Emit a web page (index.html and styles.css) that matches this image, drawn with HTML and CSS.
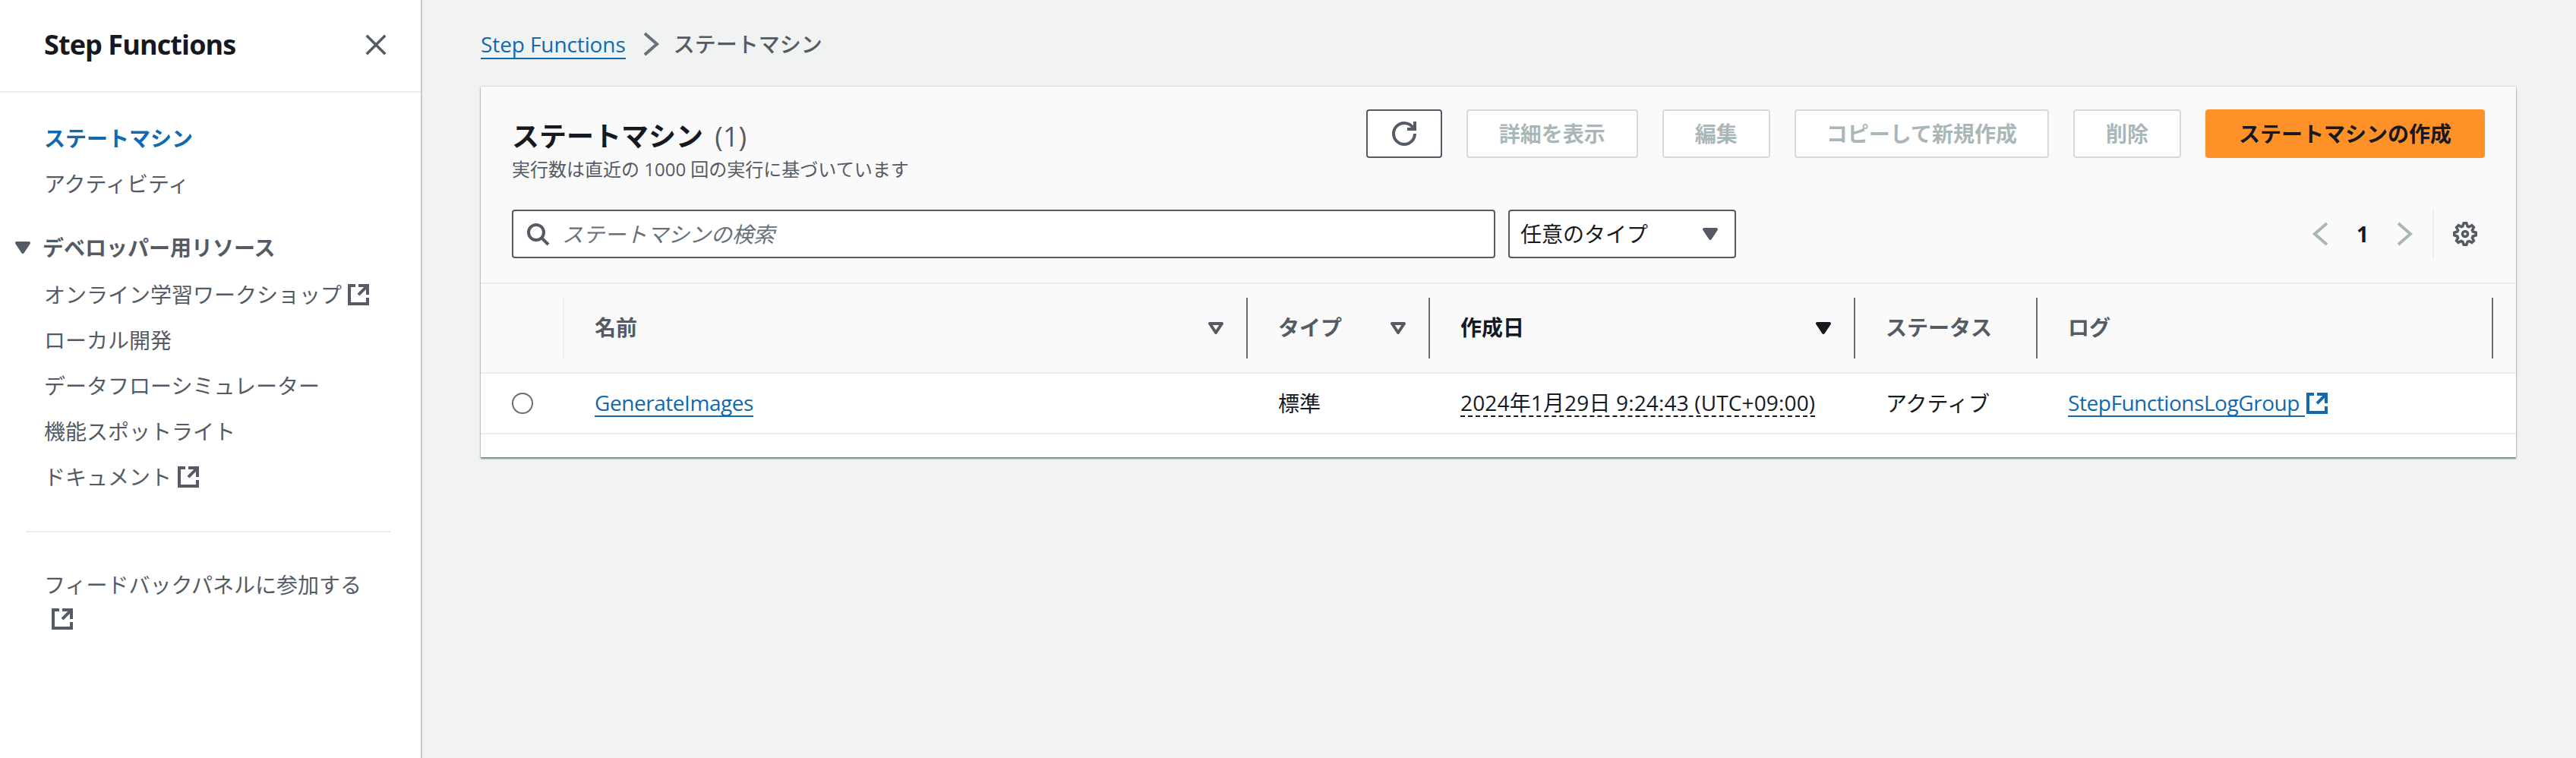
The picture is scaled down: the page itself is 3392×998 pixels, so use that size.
FILE: index.html
```html
<!DOCTYPE html>
<html lang="ja">
<head>
<meta charset="utf-8">
<title>ステートマシン - Step Functions</title>
<link rel="stylesheet" href="styles.css">
</head>
<body>
<svg class="defs" width="0" height="0" aria-hidden="true">
  <symbol id="ext" viewBox="0 0 16 16"><path d="M14 8.01v-6H8M14.02 2 8 8.02M6 2.01H2v12h12v-3.99" fill="none" stroke="currentColor" stroke-width="2"/></symbol>
  <symbol id="caret" viewBox="0 0 16 16"><path d="M4 5h8l-4 6z" fill="currentColor" stroke="currentColor" stroke-width="2" stroke-linejoin="round"/></symbol>
  <symbol id="sort" viewBox="0 0 16 16"><path d="M4 5h8l-4 6z" fill="none" stroke="currentColor" stroke-width="2" stroke-linejoin="round"/></symbol>
  <symbol id="chev-r" viewBox="0 0 16 16"><path d="m4 1 8 7-8 7" fill="none" stroke="currentColor" stroke-width="2"/></symbol>
  <symbol id="chev-l" viewBox="0 0 16 16"><path d="M12 1 4 8l8 7" fill="none" stroke="currentColor" stroke-width="2"/></symbol>
</svg>
<div class="app">
  <aside class="side">
    <header class="side-head">
      <h2 class="side-title">Step Functions</h2>
      <svg class="close" viewBox="0 0 16 16"><path d="m1 1 14 14M15 1 1 15" fill="none" stroke="currentColor" stroke-width="2"/></svg>
    </header>
    <nav class="nav">
      <a class="nav-item active">ステートマシン</a>
      <a class="nav-item">アクティビティ</a>
      <div class="nav-section"><svg class="section-caret"><use href="#caret"/></svg><span>デベロッパー用リソース</span></div>
      <a class="nav-item">オンライン学習ワークショップ <svg class="ext"><use href="#ext"/></svg></a>
      <a class="nav-item">ローカル開発</a>
      <a class="nav-item">データフローシミュレーター</a>
      <a class="nav-item">機能スポットライト</a>
      <a class="nav-item">ドキュメント <svg class="ext"><use href="#ext"/></svg></a>
      <hr class="nav-rule">
      <a class="nav-feedback">フィードバックパネルに参加する <svg class="ext ext-wrap"><use href="#ext"/></svg></a>
    </nav>
  </aside>
  <main class="main">
    <div class="crumbs">
      <a class="link crumb-link">Step Functions</a>
      <svg class="crumb-sep"><use href="#chev-r"/></svg>
      <span class="crumb-current">ステートマシン</span>
    </div>
    <section class="card">
      <div class="card-head">
        <div class="head-row">
          <div class="head-text">
            <h1 class="title">ステートマシン <span class="count">(1)</span></h1>
            <p class="sub">実行数は直近の 1000 回の実行に基づいています</p>
          </div>
          <div class="actions">
            <button class="btn btn-icon"><svg class="refresh" viewBox="0 0 16 16"><path d="M10 5h5V0M15 8a6.99 6.99 0 0 1-7 7 6.99 6.99 0 0 1-7-7 6.99 6.99 0 0 1 7-7 6.99 6.99 0 0 1 6.41 4.17" fill="none" stroke="currentColor" stroke-width="2"/></svg></button>
            <button class="btn btn-off">詳細を表示</button>
            <button class="btn btn-off">編集</button>
            <button class="btn btn-off btn-long">コピーして新規作成</button>
            <button class="btn btn-off">削除</button>
            <button class="btn btn-primary">ステートマシンの作成</button>
          </div>
        </div>
        <div class="filter-row">
          <div class="search">
            <svg class="search-icon" viewBox="0 0 16 16"><circle cx="7" cy="7" r="5" fill="none" stroke="currentColor" stroke-width="2"/><path d="m15 15-4.5-4.5" fill="none" stroke="currentColor" stroke-width="2"/></svg>
            <span class="placeholder">ステートマシンの検索</span>
          </div>
          <div class="select"><span>任意のタイプ</span><svg class="select-caret"><use href="#caret"/></svg></div>
          <div class="pager">
            <svg class="pager-chev"><use href="#chev-l"/></svg>
            <span class="page-num">1</span>
            <svg class="pager-chev"><use href="#chev-r"/></svg>
          </div>
          <div class="prefs">
            <svg class="gear" viewBox="-1 -1 18 18"><path d="m13.3 5.2 1.1-2.1L13 1.7l-2.1 1.1c-.3-.2-.7-.3-1.1-.4L9 0H7l-.8 2.3c-.3.1-.7.2-1 .4L3.1 1.6 1.6 3.1l1.1 2.1c-.2.3-.3.7-.4 1L0 7v2l2.3.8c.1.4.3.7.4 1.1l-1.1 2.1 1.4 1.4 2.1-1.1c.3.2.7.3 1.1.4L7 16h2l.8-2.3c.4-.1.7-.3 1.1-.4l2.1 1.1 1.4-1.4-1.1-2.1c.2-.3.3-.7.4-1.1L16 9V7l-2.3-.8c-.1-.3-.2-.7-.4-1Z" fill="none" stroke="currentColor" stroke-width="2"/><circle cx="8" cy="8" r="2" fill="none" stroke="currentColor" stroke-width="2"/></svg>
          </div>
        </div>
      </div>
      <div class="table-head grid-cols">
        <div class="th th-first"></div>
        <div class="th"><span class="th-label">名前</span><svg class="sort"><use href="#sort"/></svg></div>
        <div class="th"><span class="th-label">タイプ</span><svg class="sort"><use href="#sort"/></svg></div>
        <div class="th th-sorted"><span class="th-label">作成日</span><svg class="sort"><use href="#caret"/></svg></div>
        <div class="th"><span class="th-label">ステータス</span></div>
        <div class="th"><span class="th-label">ログ</span></div>
      </div>
      <div class="table-row grid-cols">
        <div class="td td-radio"><span class="radio"></span></div>
        <div class="td"><a class="link row-link">GenerateImages</a></div>
        <div class="td">標準</div>
        <div class="td"><span class="date">2024年1月29日 9:24:43 (UTC+09:00)</span></div>
        <div class="td">アクティブ</div>
        <div class="td td-log"><a class="link row-link">StepFunctionsLogGroup </a><svg class="ext ext-link"><use href="#ext"/></svg></div>
      </div>
      <div class="card-foot"></div>
    </section>
  </main>
</div>
</body>
</html>
```

FILE: styles.css
```css
* { box-sizing: border-box; }
html, body { margin: 0; height: 100%; overflow: hidden; }
body {
  font-family: "Open Sans", "Noto Sans CJK JP", sans-serif;
  font-size: 28px;
  line-height: 40px;
  color: #16191f;
  background: #f1f3f3;
}
.defs { position: absolute; }
h1, h2, p { margin: 0; }
svg { display: block; flex: none; }

.app { display: flex; height: 998px; overflow: hidden; }

/* side navigation */
.side {
  flex: none;
  width: 556px;
  background: #fff;
  border-right: 2px solid #c6cccc;
}
.side-head {
  display: flex;
  align-items: center;
  justify-content: space-between;
  height: 122px;
  padding: 0 45px 2px 58px;
  border-bottom: 2px solid #eaeded;
}
.side-title { font-size: 36px; line-height: 44px; font-weight: 700; letter-spacing: -0.9px; }
.close { width: 28px; height: 28px; color: #545b64; }
.nav { padding: 30px 0 0 58px; color: #545b64; }
.nav-item {
  display: flex;
  align-items: center;
  gap: 6px;
  height: 60px;
  white-space: nowrap;
}
.nav-item.active { color: #0f6ab0; font-weight: 700; }
.nav-section {
  display: flex;
  align-items: center;
  gap: 10px;
  height: 60px;
  margin: 24px 0 2px -44px;
  font-weight: 700;
}
.section-caret { width: 32px; height: 32px; }
.ext { width: 32px; height: 32px; }
.nav-rule { height: 2px; margin: 41px 40px 0 -24px; border: 0; background: #eaeded; }
.nav-feedback { display: block; margin: 47px 40px 0 0; line-height: 44px; }
.ext-wrap { margin: 7px 0 0 8px; }

/* main */
.main { flex: 1; min-width: 0; padding: 36px 79px 0 77px; }
.crumbs { display: flex; align-items: center; height: 44px; }
.link { color: #0f6ab0; }
.crumb-link { display: block; line-height: 36px; border-bottom: 2px solid #0f6ab0; margin-top: 2px; letter-spacing: -0.1px; }
.crumb-sep { width: 32px; height: 32px; margin: 0 14px 0 17px; color: #687078; }
.crumb-current { color: #545b64; font-weight: 500; }

.card {
  background: #fff;
  margin-top: 34px;
  box-shadow: 0 2px 2px rgba(0, 28, 36, .5), 0 0 2px rgba(0, 28, 36, .25);
}
.card-head { background: #fafafa; padding: 30px 41px 32px; }
.head-row { display: flex; justify-content: space-between; align-items: flex-start; }
.head-text { padding-top: 16px; }
.title { font-size: 36px; line-height: 40px; font-weight: 700; }
.count { font-weight: 400; color: #545b64; margin-left: 6px; }
.sub { font-size: 24px; line-height: 32px; color: #545b64; margin-top: 7px; }
.actions { display: flex; gap: 32px; }
.btn {
  height: 64px;
  padding: 0 41px;
  border: 2px solid #545b64;
  border-radius: 4px;
  background: #fff;
  font: inherit;
  font-weight: 700;
  white-space: nowrap;
}
.btn-icon { display: flex; align-items: center; justify-content: center; width: 100px; padding: 0; color: #545b64; }
.refresh { width: 32px; height: 32px; }
.btn-off { border-color: #d5dbdb; color: #aab7b8; }
.btn-long { padding: 0 40px; }
.btn-primary { padding: 0 42px; background: #ff9129; border-color: #ff9129; color: #16191f; }

.filter-row { display: flex; align-items: center; margin-top: 37px; height: 64px; }
.search {
  display: flex;
  align-items: center;
  gap: 16px;
  width: 1295px;
  height: 64px;
  padding-left: 16px;
  background: #fff;
  border: 2px solid #545b64;
  border-radius: 4px;
  color: #545b64;
}
.search-icon { width: 32px; height: 32px; }
.placeholder { font-style: italic; color: #687078; }
.select {
  display: flex;
  align-items: center;
  justify-content: space-between;
  width: 300px;
  height: 64px;
  margin-left: 17px;
  padding: 0 16px 0 14px;
  background: #fff;
  border: 2px solid #545b64;
  border-radius: 4px;
}
.select-caret { width: 32px; height: 32px; color: #545b64; }
.pager { display: flex; align-items: center; gap: 31px; margin-left: auto; color: #aab7b8; }
.pager-chev { width: 32px; height: 32px; }
.page-num { color: #16191f; font-weight: 700; }
.prefs {
  display: flex;
  align-items: center;
  height: 64px;
  margin: 0 10px 0 21px;
  padding-left: 25px;
  border-left: 2px solid #eaeded;
  color: #545b64;
}
.gear { width: 32px; height: 32px; }

/* table */
.grid-cols { display: grid; grid-template-columns: 110px 900px 240px 560px 240px 600px; }
.table-head {
  height: 120px;
  align-items: center;
  background: #fafafa;
  border-top: 2px solid #eaeded;
  border-bottom: 2px solid #eaeded;
}
.th {
  display: flex;
  align-items: center;
  justify-content: space-between;
  height: 80px;
  padding: 0 24px 0 40px;
  border-right: 2px solid #687078;
  color: #545b64;
  font-weight: 700;
}
.th-first { border-right-color: #eaeded; }
.th-sorted { color: #16191f; }
.th-label { margin-top: -3px; }
.sort { width: 32px; height: 32px; }
.table-row { height: 80px; align-items: center; border-bottom: 2px solid #eaeded; }
.td { display: flex; align-items: center; padding-left: 40px; }
.td-radio { padding-left: 41px; }
.radio { width: 28px; height: 28px; border: 2px solid #687078; border-radius: 50%; }
.row-link {
  display: block;
  line-height: 34px;
  border-bottom: 2px solid #0f6ab0;
  white-space: pre;
  letter-spacing: -0.45px;
}
.ext-link { color: #0f6ab0; }
.date { line-height: 34px; border-bottom: 2px dashed #16191f; white-space: nowrap; letter-spacing: 0.15px; }
.card-foot { height: 30px; }
```
